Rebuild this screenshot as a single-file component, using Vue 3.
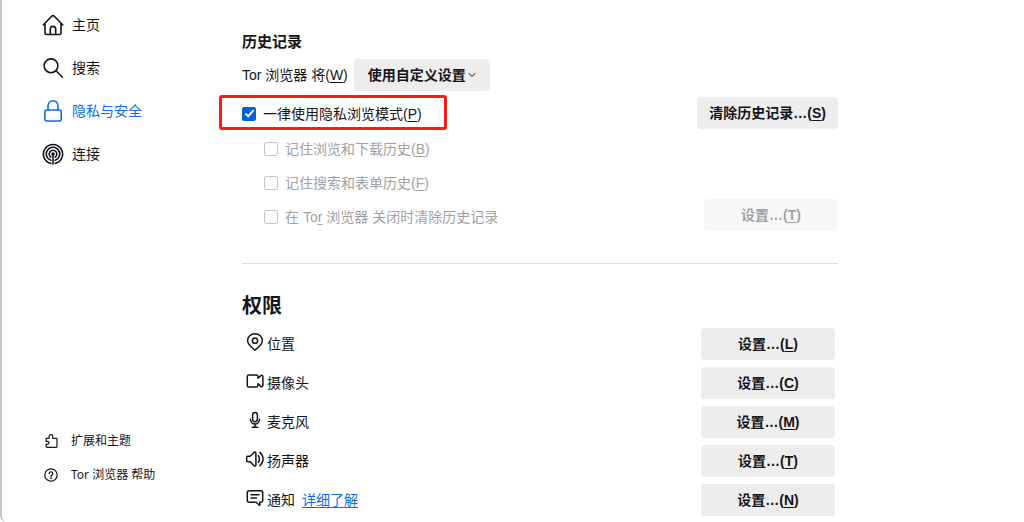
<script setup>
import { ref } from 'vue'

const historyMode = ref('custom')
const alwaysPrivate = ref(true)

const subOptions = [
  { id: 'remember-history', before: '记住浏览和下载历史(', key: 'B', after: ')' },
  { id: 'remember-forms', before: '记住搜索和表单历史(', key: 'F', after: ')' },
  { id: 'clear-on-close', before: '在 To', key: 'r', after: ' 浏览器 关闭时清除历史记录', button: 'T' }
]

const permissions = [
  { id: 'location', label: '位置', key: 'L' },
  { id: 'camera', label: '摄像头', key: 'C' },
  { id: 'microphone', label: '麦克风', key: 'M' },
  { id: 'speaker', label: '扬声器', key: 'T' },
  { id: 'notification', label: '通知', key: 'N', more: true }
]
</script>

<template>
  <div class="page">
    <aside class="sidebar">
      <nav class="nav">
        <a href="#home" class="nav-item">
          <svg class="nav-icon" viewBox="0 0 22 22">
            <path d="M1.200 11 9.700 2.200a1.800 1.800 0 0 1 2.600 0L20.800 11M3 9.600v9.200c0 1 .7 1.700 1.700 1.700h12.600c1 0 1.700-.7 1.700-1.700V9.600M8.300 20.300v-5.200a2.700 2.700 0 0 1 5.400 0v5.200" />
          </svg>
          <span>主页</span>
        </a>
        <a href="#search" class="nav-item">
          <svg class="nav-icon" viewBox="0 0 22 22">
            <circle cx="9" cy="8.800" r="6.900" />
            <path d="m14 13.800 6.400 6.400" />
          </svg>
          <span>搜索</span>
        </a>
        <a href="#privacy" class="nav-item active">
          <svg class="nav-icon" viewBox="0 0 22 22">
            <rect x="2.800" y="10" width="16.400" height="11" rx="2" />
            <path d="M6 10V5.800a5 5 0 0 1 10 0V10" />
          </svg>
          <span>隐私与安全</span>
        </a>
        <a href="#connection" class="nav-item">
          <svg class="nav-icon" viewBox="0 0 22 22">
            <path d="M8.800 20.400a9.600 9.600 0 1 1 4.400 0M8.800 17.300a6.700 6.700 0 1 1 4.400 0M8.800 14.100a3.800 3.800 0 1 1 4.400 0" />
            <circle class="solid" cx="11" cy="11" r="1" />
            <path d="M11 11v10" />
          </svg>
          <span>连接</span>
        </a>
      </nav>
      <nav class="nav-footer">
        <a href="#addons" class="foot-item">
          <svg class="foot-icon" viewBox="0 0 14 14">
            <path d="M2.200 4.300h2.900V2.500a1.800 1.800 0 0 1 3.600 0v1.800h3.500c.5 0 .8.300.8.800v7.400c0 .5-.3.800-.8.800H3c-.5 0-.8-.3-.8-.8v-2.400h1.400a1.400 1.400 0 0 0 0-2.800H2.200Z" />
          </svg>
          <span>扩展和主题</span>
        </a>
        <a href="#help" class="foot-item">
          <svg class="foot-icon" viewBox="0 0 14 14">
            <circle cx="7" cy="7" r="6.200" />
            <path d="M5.200 5.600a1.800 1.800 0 1 1 2.900 1.400C7.400 7.500 7 7.700 7 8.400" />
            <circle class="solid" cx="7" cy="10.200" r=".3" />
          </svg>
          <span>Tor 浏览器 帮助</span>
        </a>
      </nav>
    </aside>

    <main class="content">
      <section>
        <h2 class="subheading">历史记录</h2>
        <div class="mode-row">
          <label for="history-mode">Tor 浏览器 将(<u>W</u>)</label>
          <div class="select-wrap">
            <select id="history-mode" v-model="historyMode" class="button select">
              <option value="custom">使用自定义设置</option>
            </select>
            <svg class="chevron" viewBox="0 0 8 8"><path d="m1 2.500 3 3 3-3" /></svg>
          </div>
        </div>

        <div class="private-row">
          <label class="check highlighted">
            <input v-model="alwaysPrivate" type="checkbox" />
            <span>一律使用隐私浏览模式(<u>P</u>)</span>
          </label>
          <button type="button" class="button clear-button">清除历史记录…(<u>S</u>)</button>
        </div>

        <div v-for="o in subOptions" :key="o.id" class="sub-row">
          <label class="check">
            <input type="checkbox" disabled />
            <span>{{ o.before }}<u>{{ o.key }}</u>{{ o.after }}</span>
          </label>
          <button v-if="o.button" type="button" class="button settings" disabled>设置…(<u>{{ o.button }}</u>)</button>
        </div>
      </section>

      <hr class="divider" />

      <section>
        <h1 class="heading">权限</h1>
        <ul class="permissions">
          <li v-for="p in permissions" :key="p.id" class="permission">
            <svg class="perm-icon" viewBox="0 0 18 18">
              <template v-if="p.id === 'location'">
                <path d="M9 17.200C6 14.400 1.600 11.600 1.600 7.700a7.400 6.900 0 0 1 14.800 0C16.400 11.600 12 14.400 9 17.200Z" />
                <circle cx="9" cy="7.700" r="2.600" />
              </template>
              <template v-else-if="p.id === 'camera'">
                <path d="M12 6.300V4.600c0-1-.7-1.700-1.700-1.700H3C2 2.900 1.300 3.600 1.300 4.600v8.800c0 1 .7 1.700 1.700 1.700h7.300c1 0 1.700-.7 1.700-1.700v-1.700l2.900 2.700c.8.700 2 .2 2-.8V4.400c0-1-1.200-1.500-2-.8Z" />
              </template>
              <template v-else-if="p.id === 'microphone'">
                <rect x="6.600" y="1.500" width="4.800" height="9.200" rx="2.400" />
                <path d="M4.500 8.300a4.500 4.700 0 0 0 9 0M9 13v3.200M6.300 16.300h5.400" />
              </template>
              <template v-else-if="p.id === 'speaker'">
                <path d="M1.700 6.200h2.500l3.900-3.900c.7-.7 1.800-.3 1.800.7v12c0 1-1.100 1.400-1.800.7l-3.900-3.900H1.700c-.6 0-1-.4-1-1V7.200c0-.6.4-1 1-1ZM12.400 5.600c1.200 2.100 1.200 4.700 0 6.800M13.900 2.400c4.200 3.600 4.200 9.600 0 13.200" />
              </template>
              <template v-else>
                <path d="M3 1.700h12c.9 0 1.700.8 1.700 1.700v8.200c0 .9-.8 1.700-1.700 1.700h-1.200v3.200L10 13.300H3c-.9 0-1.700-.8-1.700-1.700V3.400c0-.9.8-1.700 1.700-1.700ZM5 5.700h8M5 9h5.500" />
              </template>
            </svg>
            <span class="perm-label">{{ p.label }}</span>
            <a v-if="p.more" href="#learn-more" class="more">详细了解</a>
            <button type="button" class="button settings">设置…(<u>{{ p.key }}</u>)</button>
          </li>
        </ul>
      </section>
    </main>
  </div>
</template>

<style>
body {
  background: #fff;
}
</style>

<style scoped>
.page {
  box-sizing: border-box;
  min-height: 100vh;
  display: grid;
  grid-template-columns: 240px minmax(0, 1fr);
  border-left: 2px solid #c6c6c8;
  border-bottom-left-radius: 6px;
  color: #15141a;
  font: 14px/20px "Liberation Sans", "Noto Sans CJK SC", sans-serif;
}

.sidebar {
  display: flex;
  flex-direction: column;
  justify-content: space-between;
  padding: 3px 0 30px 40px;
}

.nav,
.nav-footer {
  display: flex;
  flex-direction: column;
}

.nav-item {
  display: flex;
  align-items: center;
  gap: 8px;
  height: 43px;
  color: inherit;
  text-decoration: none;
}

.active {
  color: #0f6be8;
}

.foot-item {
  display: flex;
  align-items: center;
  gap: 13px;
  height: 34px;
  padding-left: 2px;
  color: inherit;
  font-family: "Noto Sans", "Noto Sans CJK SC", sans-serif;
  font-size: 12px;
  text-decoration: none;
}

svg {
  flex: none;
  fill: none;
  stroke: currentColor;
  stroke-width: 1.6;
  stroke-linecap: round;
  stroke-linejoin: round;
}

.solid {
  fill: currentColor;
}

.nav-icon {
  width: 22px;
  height: 22px;
}

.foot-icon {
  width: 14px;
  height: 14px;
  stroke-width: 1.2;
}

.content {
  padding: 32px 186px 6px 0;
}

u {
  text-underline-offset: 2px;
}

.subheading {
  margin: 0 0 7px;
  font-size: 15px;
  line-height: 20px;
}

.mode-row {
  display: flex;
  align-items: center;
  gap: 6px;
  margin-bottom: 4px;
}

.select-wrap {
  position: relative;
}

.button {
  box-sizing: border-box;
  height: 32px;
  padding: 0 12px;
  border: 0;
  border-radius: 4px;
  background: #ededee;
  color: inherit;
  font: inherit;
  font-weight: 700;
}

.button:disabled {
  opacity: 0.4;
}

.select {
  appearance: none;
  padding: 0 24px 0 14px;
}

.chevron {
  position: absolute;
  top: 12px;
  right: 14px;
  width: 8px;
  height: 8px;
  stroke-width: 1;
  pointer-events: none;
}

.private-row,
.sub-row {
  display: flex;
  align-items: center;
  justify-content: space-between;
}

.private-row {
  margin-bottom: 2px;
}

.sub-row {
  height: 34px;
  padding-left: 22px;
}

.sub-row .button {
  margin-bottom: 4px;
}

.check {
  display: flex;
  align-items: center;
  gap: 7px;
}

.check:has(input:disabled) {
  color: #a1a1a3;
}

.highlighted {
  box-sizing: border-box;
  height: 35px;
  margin-left: -23px;
  padding: 2px 22px 0 20px;
  border: 3px solid #fb1d10;
  border-radius: 3px;
}

input {
  appearance: none;
  display: grid;
  place-items: center;
  box-sizing: border-box;
  width: 14px;
  height: 14px;
  margin: 0;
  border: 1px solid #c4c4ca;
  border-radius: 2px;
  background: #fff;
}

input:checked {
  border-color: #0061e0;
  background: #0061e0;
}

input:checked::after {
  content: "";
  width: 3px;
  height: 7px;
  margin-bottom: 2px;
  border: solid #fff;
  border-width: 0 2px 2px 0;
  transform: rotate(42deg);
}

.settings {
  width: 134px;
}

.divider {
  height: 1px;
  margin: 29px 0 28px;
  border: 0;
  background: #dedee0;
}

.heading {
  margin: 0 0 8px;
  font-size: 20px;
  line-height: 28px;
}

.permissions {
  display: flex;
  flex-direction: column;
  gap: 7px;
  margin: 0;
  padding: 0 3px 0 4px;
  list-style: none;
}

.permission {
  display: flex;
  align-items: center;
}

.permission .settings {
  margin-left: auto;
}

.perm-icon {
  width: 18px;
  height: 18px;
  margin-right: 3px;
  margin-bottom: 4px;
  stroke-width: 1.5;
}

.more {
  margin-left: 7px;
  color: #0f6be8;
  text-underline-offset: 2px;
}
</style>
